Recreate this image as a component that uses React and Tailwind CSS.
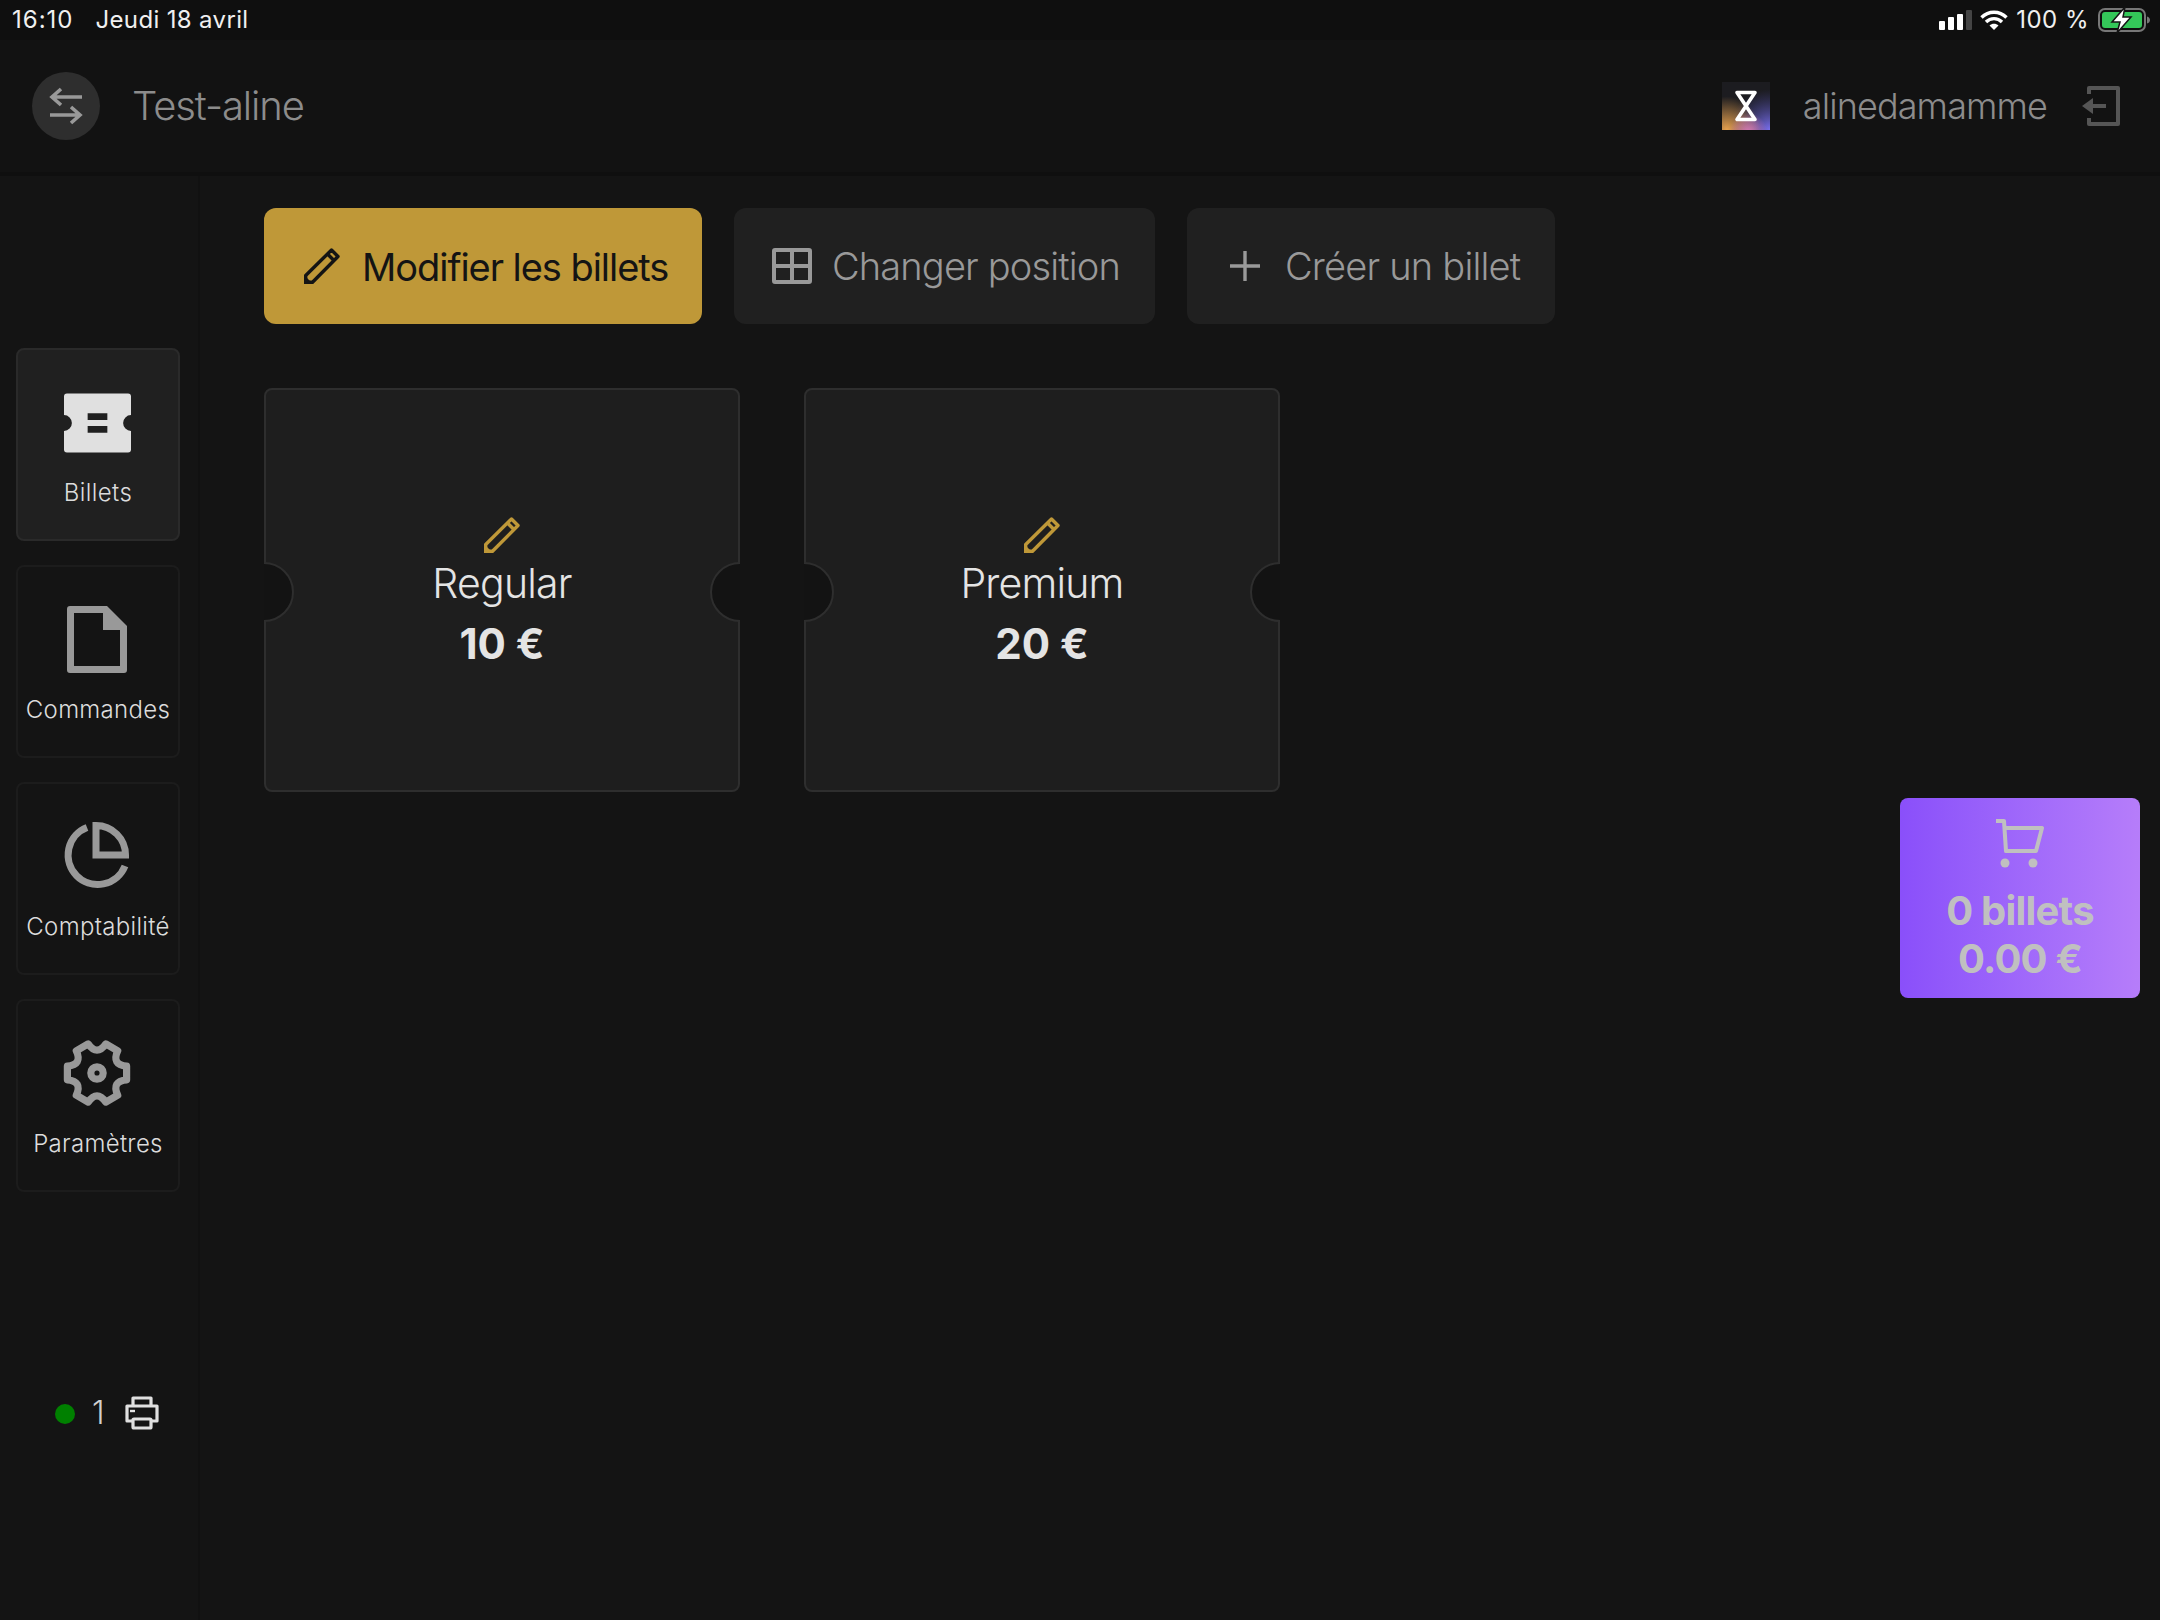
import React from 'react';

const gearPath = (() => {
  const c = 33;
  const pt = (deg, r) => {
    const a = (deg * Math.PI) / 180;
    return `${(c + r * Math.cos(a)).toFixed(2)} ${(c + r * Math.sin(a)).toFixed(2)}`;
  };
  let d = `M${pt(-13, 29.5)}`;
  for (let i = 0; i < 6; i++) {
    const lobe = i * 60;
    d += ` L${pt(lobe + 13, 29.5)}`;
    d += ` Q${pt(lobe + 30, 16)} ${pt(lobe + 47, 29.5)}`;
  }
  return d + ' Z';
})();

function TicketIcon() {
  return (
    <svg width="67" height="60" viewBox="0 0 68 60">
      <path
        fill="#e0e0e0"
        fillRule="evenodd"
        d="M3 0H65a3 3 0 0 1 3 3V22a8 8 0 0 0 0 16V57a3 3 0 0 1-3 3H3a3 3 0 0 1-3-3V38a8 8 0 0 0 0-16V3a3 3 0 0 1 3-3ZM24 20V27H44V20ZM24 33V40H44V33Z"
      />
    </svg>
  );
}

function FileIcon() {
  return (
    <svg width="60" height="67" viewBox="0 0 60 67">
      <path
        fill="#999"
        fillRule="evenodd"
        d="M3 0H40L60 20V64a3 3 0 0 1-3 3H3a3 3 0 0 1-3-3V3a3 3 0 0 1 3-3ZM7 7V60H53V24H36V7Z"
      />
    </svg>
  );
}

function PieIcon() {
  return (
    <svg width="68" height="68" viewBox="0 0 68 68" fill="none" stroke="#999" strokeWidth="7">
      <path d="M24 5.5A29.5 29.5 0 1 0 62 44" />
      <path d="M33 3.5A29.5 29.5 0 0 1 62.5 33H33Z" />
    </svg>
  );
}

function GearIcon() {
  return (
    <svg width="68" height="68" viewBox="0 0 66 66" fill="none" stroke="#999" strokeWidth="7" strokeLinejoin="round">
      <path d={gearPath} />
      <circle cx="33" cy="33" r="6" />
    </svg>
  );
}

function PencilIcon({ color }) {
  return (
    <svg width="36" height="36" viewBox="0 0 36 36" fill="none" stroke={color} strokeWidth="3.4">
      <path d="M1.7 34.3V27.5L27.5 2L34 8.5L8.5 34.3Z" strokeLinejoin="round" />
      <path d="M23.5 6L30 12.5" />
      <path d="M0 36V27L9 36Z" fill={color} stroke="none" />
    </svg>
  );
}

function GridIcon() {
  return (
    <svg width="40" height="36" viewBox="0 0 40 36" fill="none" stroke="#999" strokeWidth="4">
      <rect x="2" y="2" width="36" height="32" rx="1" />
      <path d="M20 2V34M2 18H38" />
    </svg>
  );
}

function SwapIcon() {
  return (
    <svg width="34" height="38" viewBox="0 0 34 38" fill="none" stroke="#999" strokeWidth="3.6">
      <path d="M33 10H3M12 2L3 10L12 18" />
      <path d="M1 28H31M22 20L31 28L22 36" />
    </svg>
  );
}

function LogoutIcon() {
  return (
    <svg width="38" height="40" viewBox="0 0 38 40" fill="none">
      <path d="M7 8V2H36V38H7V32" stroke="#555" strokeWidth="4" strokeLinejoin="round" />
      <path d="M10 20H24" stroke="#555" strokeWidth="4" />
      <path d="M0 20L11 12V28Z" fill="#555" />
    </svg>
  );
}

function BrandLogo() {
  return (
    <svg width="48" height="48" viewBox="0 0 48 48">
      <defs>
        <radialGradient id="logoOrange" cx="0.1" cy="1" r="0.7">
          <stop offset="0" stopColor="#e8a24f" />
          <stop offset="1" stopColor="#e8a24f" stopOpacity="0" />
        </radialGradient>
        <radialGradient id="logoViolet" cx="1" cy="1" r="0.85">
          <stop offset="0" stopColor="#7a70f0" />
          <stop offset="1" stopColor="#4a48a0" stopOpacity="0" />
        </radialGradient>
        <radialGradient id="logoPink" cx="0.55" cy="1.05" r="0.4">
          <stop offset="0" stopColor="#d77ab8" />
          <stop offset="1" stopColor="#d77ab8" stopOpacity="0" />
        </radialGradient>
      </defs>
      <rect width="48" height="48" fill="#1c1c20" />
      <rect width="48" height="48" fill="url(#logoViolet)" />
      <rect width="48" height="48" fill="url(#logoOrange)" />
      <rect width="48" height="48" fill="url(#logoPink)" />
      <path
        d="M15 10.5H33L15 37.5H33Z"
        fill="none"
        stroke="#fff"
        strokeWidth="3.6"
        strokeLinejoin="round"
      />
    </svg>
  );
}

function CartIcon() {
  return (
    <svg width="50" height="50" viewBox="0 0 50 50" fill="none" stroke="#c0c0c0" strokeWidth="4" strokeLinejoin="round">
      <path d="M1 3H9L11 33H41L47 10H11" />
      <circle cx="10" cy="45" r="4.5" fill="#c0c0c0" stroke="none" />
      <circle cx="38" cy="45" r="4.5" fill="#c0c0c0" stroke="none" />
    </svg>
  );
}

function PrinterIcon() {
  return (
    <svg width="34" height="34" viewBox="0 0 34 34" fill="none" stroke="#e0e0e0" strokeWidth="3.2" strokeLinejoin="round">
      <path d="M8 10V2H26V10" />
      <path d="M8 25H2V10H32V25H26" />
      <rect x="8" y="23" width="18" height="9" rx="1" />
      <path d="M5 15H10" strokeWidth="2.4" />
    </svg>
  );
}

function StatusIcons() {
  return (
    <div className="flex items-center">
      <div className="flex items-end gap-[3px] h-5">
        <div className="w-[6px] h-[9px] rounded-[1px] bg-white" />
        <div className="w-[6px] h-[13px] rounded-[1px] bg-white" />
        <div className="w-[6px] h-4 rounded-[1px] bg-white" />
        <div className="w-[6px] h-5 rounded-[1px] bg-[#444]" />
      </div>
      <svg className="ml-2" width="28" height="20" viewBox="0 0 28 20" fill="none" stroke="#fff" strokeWidth="3.4">
        <path d="M1.5 7.5C8.5 0.5 19.5 0.5 26.5 7.5" />
        <path d="M6 12C10.5 7.5 17.5 7.5 22 12" />
        <path d="M14 20L9.5 15.5C12 13.3 16 13.3 18.5 15.5Z" fill="#fff" stroke="none" />
      </svg>
      <span className="ml-2 text-[24px] text-[#f0f0f0] tracking-[0.5px]">100 %</span>
      <svg className="ml-[9px]" width="52" height="26" viewBox="0 0 52 26" fill="none">
        <rect x="1" y="2" width="46" height="22" rx="6" stroke="#777" strokeWidth="2" />
        <rect x="4" y="5" width="40" height="16" rx="3" fill="#34c759" />
        <path d="M49 9.5C51 10 52 11.5 52 13C52 14.5 51 16 49 16.5Z" fill="#777" />
        <path d="M27 0L14 15H22L19 26L33 10H25Z" fill="#fff" stroke="#141414" strokeWidth="1.5" />
      </svg>
    </div>
  );
}

function NavItem({ icon, label, active }) {
  return (
    <div
      className={
        active
          ? 'h-[193px] rounded-lg border-2 border-[#2a2a2a] bg-[#202020] flex flex-col items-center pt-[39px]'
          : 'h-[193px] rounded-lg border-2 border-[#1c1c1c] bg-[#141414] flex flex-col items-center pt-[38px]'
      }
    >
      <div className="h-[68px] mr-[2px] flex items-center justify-center">{icon}</div>
      <span className={active ? 'mt-[20px] text-[24px] leading-8 font-[350] tracking-[0.4px] text-[#dcdcdc]' : 'mt-[21px] text-[24px] leading-8 font-[350] tracking-[0.3px] text-[#dcdcdc]'}>{label}</span>
    </div>
  );
}

function Notch({ side }) {
  return (
    <div
      className={
        side === 'left'
          ? 'absolute left-[-2px] top-[calc(50%-28px)] w-[32px] h-[60px] overflow-hidden'
          : 'absolute right-[-2px] top-[calc(50%-28px)] w-[32px] h-[60px] overflow-hidden'
      }
    >
      <div
        className={
          side === 'left'
            ? 'absolute left-[-30px] top-0 w-[60px] h-[60px] rounded-full bg-[#131313] border-2 border-[#2e2e2e]'
            : 'absolute right-[-30px] top-0 w-[60px] h-[60px] rounded-full bg-[#131313] border-2 border-[#2e2e2e]'
        }
      />
    </div>
  );
}

function Ticket({ name, price }) {
  return (
    <div className="relative w-[476px] h-[404px] rounded-lg border-2 border-[#2e2e2e] bg-[#1e1e1e] flex flex-col items-center pt-[127px]">
      <PencilIcon color="#bf9838" />
      <span className="mt-[2px] text-[41px] leading-[56px] font-light tracking-[-0.8px] text-[#e4e4e4]">{name}</span>
      <span className="mt-[5px] text-[42px] leading-[56px] font-bold text-[#e4e4e4]">{price}</span>
      <Notch side="left" />
      <Notch side="right" />
    </div>
  );
}

export default function App() {
  return (
    <div className="relative w-[2160px] h-[1620px] overflow-hidden bg-[#141414] flex flex-col font-['Inter',sans-serif]">
      {/* iPad status bar */}
      <div className="h-10 shrink-0 bg-[#0f0f0f] flex items-center justify-between pl-3 pr-[10px]">
        <div className="flex gap-[22px] text-[24px] text-[#f0f0f0]">
          <span className="tracking-[1px]">16:10</span>
          <span className="tracking-[0.35px]">Jeudi 18 avril</span>
        </div>
        <StatusIcons />
      </div>

      {/* Top bar */}
      <div className="h-[136px] shrink-0 bg-[#121212] border-b-4 border-[#0f0f0f] flex items-center justify-between pl-8 pr-10">
        <div className="flex items-center gap-8">
          <div className="w-[68px] h-[68px] rounded-full bg-[#2e2e2e] flex items-center justify-center">
            <SwapIcon />
          </div>
          <span className="text-[40px] font-light tracking-[-1.1px] text-[#8c8c8c]">Test-aline</span>
        </div>
        <div className="flex items-center">
          <BrandLogo />
          <span className="ml-[33px] text-[36px] font-light tracking-[-0.9px] text-[#8c8c8c]">alinedamamme</span>
          <div className="ml-[35px]">
            <LogoutIcon />
          </div>
        </div>
      </div>

      <div className="flex flex-1 min-h-0">
        {/* Sidebar */}
        <div className="w-[200px] shrink-0 border-r-2 border-[#111] px-4 pt-[172px] flex flex-col">
          <div className="w-[164px] flex flex-col gap-6">
            <NavItem icon={<TicketIcon />} label="Billets" active />
            <NavItem icon={<FileIcon />} label="Commandes" />
            <NavItem icon={<PieIcon />} label="Comptabilité" />
            <NavItem icon={<GearIcon />} label="Paramètres" />
          </div>
          <div className="mt-[204px] flex items-center pl-[39px]">
            <div className="w-5 h-5 mt-[2px] rounded-full bg-[#008000]" />
            <span className="ml-[17px] text-[32px] font-light leading-none text-[#d0d0d0]">1</span>
            <div className="ml-[20px]">
              <PrinterIcon />
            </div>
          </div>
        </div>

        {/* Main */}
        <div className="flex-1 pt-8 pl-[64px]">
          <div className="flex gap-8">
            <button className="h-[116px] w-[438px] rounded-xl bg-[#bf9838] flex items-center pl-10 gap-[22px] text-[38px] tracking-[-1.05px] text-[#141414]">
              <PencilIcon color="#141414" />
              <span className="mt-[2px]">Modifier les billets</span>
            </button>
            <button className="h-[116px] w-[421px] rounded-xl bg-[#202020] flex items-center pl-[38px] gap-5 text-[38px] font-light tracking-[-0.85px] text-[#999]">
              <GridIcon />
              <span className="mt-[1px]">Changer position</span>
            </button>
            <button className="h-[116px] w-[368px] rounded-xl bg-[#202020] flex items-center pl-[43px] gap-[25px] text-[38px] font-light tracking-[-0.8px] text-[#999]">
              <svg width="30" height="30" viewBox="0 0 30 30" stroke="#999" strokeWidth="3.4">
                <path d="M15 0V30M0 15H30" />
              </svg>
              <span className="mt-[1px]">Créer un billet</span>
            </button>
          </div>
          <div className="mt-16 flex gap-16">
            <Ticket name="Regular" price="10 €" />
            <Ticket name="Premium" price="20 €" />
          </div>
        </div>
      </div>

      {/* Floating cart */}
      <div className="absolute left-[1900px] top-[798px] w-[240px] h-[200px] rounded-lg bg-gradient-to-r from-[#8a4ffa] to-[#b67dfa] flex flex-col items-center pt-5">
        <CartIcon />
        <span className="mt-[19px] text-[40px] leading-[48px] font-bold tracking-[-0.8px] text-[#c0c0c0]">0 billets</span>
        <span className="text-[40px] leading-[48px] font-bold tracking-[-0.8px] text-[#c0c0c0]">0.00 €</span>
      </div>
    </div>
  );
}
